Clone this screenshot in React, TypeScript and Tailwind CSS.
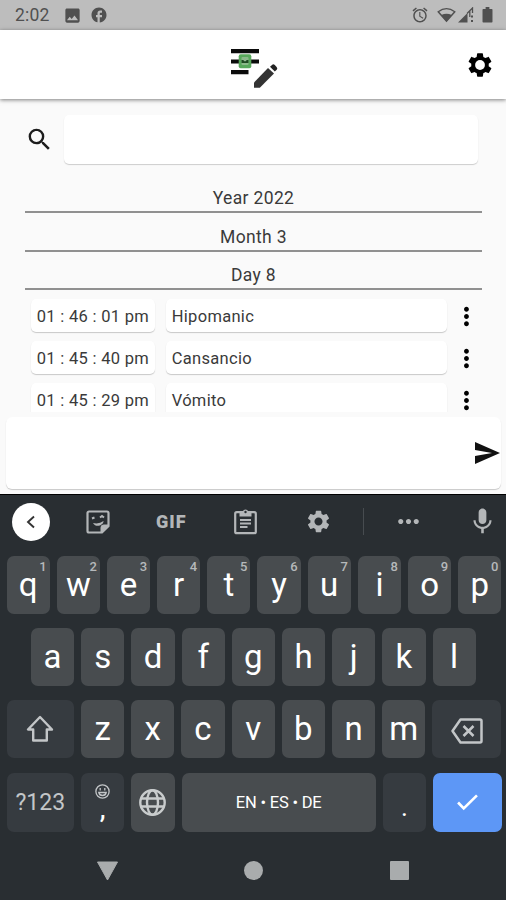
import type { ReactNode } from "react"
import { MdAlarm, MdFacebook, MdImage, MdMoreVert, MdSearch, MdSettings, MdMic, MdMoreHoriz } from "react-icons/md"

const entries = [
  { time: "01 : 46 : 01 pm", text: "Hipomanic" },
  { time: "01 : 45 : 40 pm", text: "Cansancio" },
  { time: "01 : 45 : 29 pm", text: "Vómito" },
]

const dates = ["Year 2022", "Month 3", "Day 8"]

function StatusBar() {
  return (
    <div className="flex h-[30px] shrink-0 items-center bg-[#bdbdbd] pl-[15px] pr-[13px] text-[#505050]">
      <span className="w-[50px] pt-px text-[17.500px] leading-none tracking-[0.200px]">2:02</span>
      <MdImage className="h-[19px] w-[19px] -ml-[2px]" />
      <MdFacebook className="ml-[8px] h-[18px] w-[18px]" />
      <MdAlarm className="ml-auto h-[18px] w-[18px]" />
      <svg className="ml-[8px] h-[16px] w-[19px]" viewBox="0 0 20 16">
        <path d="M1.3 4.6Q10-2 18.7 4.6L10 14.5Z" fill="none" stroke="currentColor" strokeWidth="1.5" />
        <path d="M4.5 8Q10 5.5 15.5 8L10 15Z" fill="currentColor" />
      </svg>
      <svg className="ml-[2px] h-[16px] w-[16px]" viewBox="0 0 16 16">
        <path d="M0 15.5L9.5 6v9.5z" fill="currentColor" />
        <path d="M9 6.5L14.5 1v5M11.8 4v6" fill="none" stroke="currentColor" strokeWidth="1.3" />
        <path d="M13 8.5h2v2h-2zM13 13h2v2h-2z" fill="currentColor" />
      </svg>
      <svg className="ml-[8px] h-[16px] w-[11px]" viewBox="0 0 11 17">
        <path d="M3.5 0h4v2H10a.8.8 0 01.8.8v13a.8.8 0 01-.8.8H1a.8.8 0 01-.8-.8v-13A.8.8 0 011 2h2.500z" fill="currentColor" />
      </svg>
    </div>
  )
}

function Logo() {
  return (
    <svg className="h-[44px] w-[50px]" viewBox="0 0 50 44">
      <path d="M1 3h28v4.200H1zM1 13.600h28v4H1zM1 24h17.500v4.300H1z" fill="#0b0b0b" />
      <rect x="8.700" y="8.300" width="12.600" height="14" rx="2" fill="#58a85b" />
      <rect x="11.500" y="11" width="7" height="8" rx="1" fill="#8bb98a" />
      <path d="M11.500 14h7v3h-7z" fill="#1f4a22" />
      <path d="M13.500 14l1.500 1 1.500-1" stroke="#a5c9a4" strokeWidth="1" fill="none" />
      <path d="M24 36.500l14-14.500 6 5.500-14.200 14.300H24z" fill="#333" />
      <path d="M40 20.800l2-1.900q1.300-1.200 2.800.2l1.800 1.800q1.400 1.500.1 2.900l-1.900 1.800z" fill="#222" />
    </svg>
  )
}

function Header() {
  return (
    <div className="relative z-10 flex h-[69px] shrink-0 items-center bg-white px-[12px] shadow-[0_1px_4px_rgba(0,0,0,0.5)]">
      <div className="w-[28px]" />
      <div className="flex flex-1 justify-center pl-[4px] pt-[7px]">
        <Logo />
      </div>
      <svg className="h-[28px] w-[28px]" viewBox="0 0 24 24">
        <path d="M19.430 12.980c.04-.32.07-.64.07-.98s-.03-.66-.07-.98l2.110-1.650c.19-.15.24-.42.12-.64l-2-3.460c-.12-.22-.39-.3-.61-.22l-2.490 1c-.52-.4-1.080-.73-1.690-.98l-.38-2.650C14.460 2.180 14.250 2 14 2h-4c-.25 0-.46.18-.49.42l-.38 2.650c-.61.25-1.170.59-1.690.98l-2.490-1c-.23-.09-.49 0-.61.22l-2 3.460c-.13.22-.07.49.12.64l2.110 1.650c-.04.32-.07.65-.07.98s.03.66.07.98l-2.110 1.650c-.19.15-.24.42-.12.64l2 3.460c.12.22.39.3.61.22l2.490-1c.52.4 1.080.73 1.690.98l.38 2.650c.03.24.24.42.49.42h4c.25 0 .46-.18.49-.42l.38-2.650c.61-.25 1.170-.59 1.690-.98l2.490 1c.23.09.49 0 .61-.22l2-3.460c.12-.22.07-.49-.12-.64l-2.110-1.650z" />
        <circle cx="12" cy="12" r="4.200" fill="#fff" />
      </svg>
    </div>
  )
}

function Journal() {
  return (
    <div className="h-[313px] shrink-0 overflow-hidden px-[25px] pt-[16px] text-[#3a3a3a]">
      <div className="flex items-center">
        <MdSearch className="h-[29px] w-[29px] text-[#1c1c1c]" />
        <div className="ml-[10px] h-[49px] w-[414px] rounded-[5px] bg-white shadow-[0_1px_1px_rgba(0,0,0,0.18)]" />
      </div>
      <div className="pt-[11px]">
        {dates.map((date) => (
          <div
            key={date}
            className="flex h-[38.400px] w-[457px] items-end justify-center border-b-2 border-[#909090] pb-[2px] text-[17.500px] leading-[21px] tracking-[0.350px]"
          >
            {date}
          </div>
        ))}
      </div>
      <div className="flex flex-col gap-[9px] pt-[9px] pl-[6px] text-[16.500px] tracking-[0.300px]">
        {entries.map((entry) => (
          <div key={entry.time} className="flex h-[33px] shrink-0 items-center">
            <div className="flex h-full w-[124px] items-center justify-center whitespace-nowrap rounded-[5px] bg-white pt-[3px] shadow-[0_1px_1px_rgba(0,0,0,0.2)]">
              {entry.time}
            </div>
            <div className="ml-[11px] flex h-full w-[282px] items-center rounded-[5px] bg-white pl-[6px] pt-[3px] shadow-[0_1px_1px_rgba(0,0,0,0.2)]">
              {entry.text}
            </div>
            <MdMoreVert className="ml-[5px] mt-[2px] h-[29px] w-[29px] text-black" />
          </div>
        ))}
      </div>
    </div>
  )
}

function Composer() {
  return (
    <div className="h-[82px] shrink-0 pl-[6px] pr-[5px] pt-[5px]">
      <div className="flex h-[72px] items-center justify-end rounded-[6px] bg-white pr-[1px] shadow-[0_1px_1px_rgba(0,0,0,0.2)]">
        <svg className="h-[22px] w-[25px]" viewBox="0 0 25 22">
          <path d="M0 0l25 11L0 22v-8l17-3L0 8z" fill="#111" />
        </svg>
      </div>
    </div>
  )
}

function Toolbar() {
  return (
    <div className="flex h-[61px] items-center pb-[8px] text-[#b3b6b8]">
      <div className="ml-[12px] flex h-[38px] w-[38px] items-center justify-center rounded-full bg-white">
        <svg className="h-[16px] w-[16px]" viewBox="0 0 16 16" fill="none" stroke="#333" strokeWidth="1.900">
          <path d="M11 2.500L5 8l6 5.500" />
        </svg>
      </div>
      <svg className="ml-[36px] h-[24px] w-[24px]" viewBox="0 0 24 24" fill="none" stroke="currentColor" strokeWidth="2.200">
        <path d="M3 1.500h18a1.500 1.500 0 011.500 1.500v13L16 22.500H3A1.500 1.500 0 011.500 21V3A1.500 1.500 0 013 1.500z" />
        <path d="M22 15h-4.500a2.500 2.500 0 00-2.500 2.500V22l7-7z" fill="currentColor" strokeWidth="1" />
        <path d="M6 8.500l2.500-1M14 7.500l2-1.500 2 1.500" strokeWidth="2" />
        <path d="M7 13q6 1.500 10.500-2c.3 4-7.500 7.500-10.500 2z" fill="currentColor" stroke="none" />
      </svg>
      <span className="ml-[46px] w-[32px] text-[18px] font-black leading-none tracking-[1px]">GIF</span>
      <svg className="ml-[46px] h-[27px] w-[23px]" viewBox="0 0 23 27">
        <rect x="1.200" y="4.200" width="20.600" height="21" rx="1.500" fill="none" stroke="currentColor" strokeWidth="2.200" />
        <path d="M5.500 3.500h3.300a2.800 2.800 0 015.400 0h3.300v5h-12z" fill="currentColor" />
        <circle cx="11.500" cy="4" r="1.200" fill="#292e32" />
        <path d="M6 12h11M6 15.500h11M6 19h7.500" stroke="currentColor" strokeWidth="2" />
      </svg>
      <MdSettings className="ml-[48px] h-[27px] w-[27px]" />
      <div className="ml-[31px] h-[27px] w-px bg-[#474c50]" />
      <MdMoreHoriz className="ml-[29px] h-[31px] w-[31px]" />
      <MdMic className="ml-[43px] h-[31px] w-[31px]" />
    </div>
  )
}

function Key({ label, hint }: { label: string; hint?: string }) {
  return (
    <div className="relative flex h-full w-[43.200px] shrink-0 items-center justify-center rounded-[7px] bg-[#484c4f] pb-[1px] text-[33px] leading-none text-white">
      {label}
      {hint && <span className="absolute right-[3px] top-[4px] text-[13px] leading-none font-medium text-[#b6b9bb]">{hint}</span>}
    </div>
  )
}

function DarkKey({ className, children }: { className: string; children: ReactNode }) {
  return (
    <div className={`flex h-full shrink-0 items-center justify-center rounded-[7px] bg-[#363b40] text-[#c3c6c8] ${className}`}>
      {children}
    </div>
  )
}

function Keyboard() {
  return (
    <div className="h-[406px] shrink-0 border-t border-black bg-[#292e32]">
      <Toolbar />
      <div className="flex flex-col gap-[14.700px] pl-[6.500px]">
        <div className="flex h-[57.500px] gap-[7px]">
          {"qwertyuiop".split("").map((k, i) => (
            <Key key={k} label={k} hint={String((i + 1) % 10)} />
          ))}
        </div>
        <div className="flex h-[57.500px] gap-[7px] pl-[24.500px]">
          {"asdfghjkl".split("").map((k) => (
            <Key key={k} label={k} />
          ))}
        </div>
        <div className="flex h-[57.500px] gap-[7px]">
          <DarkKey className="w-[67.500px]">
            <svg className="h-[28px] w-[28px]" viewBox="0 0 28 28" fill="none" stroke="currentColor" strokeWidth="2.400" strokeLinejoin="round">
              <path d="M14 2L2 14.500h5.200v11h13.600v-11H26z" />
            </svg>
          </DarkKey>
          {"zxcvbnm".split("").map((k) => (
            <Key key={k} label={k} />
          ))}
          <DarkKey className="w-[68.500px]">
            <svg className="mt-[3px] h-[26px] w-[32px]" viewBox="0 0 32 26" fill="none" stroke="currentColor" strokeWidth="2.500">
              <path d="M9.500 1.500H29a1.500 1.500 0 011.500 1.500v20a1.500 1.500 0 01-1.500 1.500H9.500L1.500 13z" strokeLinejoin="round" />
              <path d="M12.500 8l10 10M22.500 8l-10 10" />
            </svg>
          </DarkKey>
        </div>
        <div className="flex h-[59px] gap-[7px]">
          <DarkKey className="w-[67.500px] pt-[2px] text-[23px]">?123</DarkKey>
          <DarkKey className="w-[43.200px] flex-col">
            <svg className="mt-[2px] h-[15px] w-[15px]" viewBox="0 0 15 15" fill="none" stroke="currentColor" strokeWidth="1.300">
              <circle cx="7.500" cy="7.500" r="6.600" />
              <path d="M5.200 4v2.500M9.800 4v2.500M3.800 8.500h7.400c-.8 4-6.600 4-7.400 0z" />
            </svg>
            <span className="text-[26px] font-medium leading-[28px] text-white -mt-[4px]">,</span>
          </DarkKey>
          <div className="flex w-[43.400px] items-center justify-center rounded-[7px] bg-[#484c4f] text-[#c9cccd]">
            <svg className="h-[27px] w-[27px]" viewBox="0 0 27 27" fill="none" stroke="currentColor" strokeWidth="2.400">
              <circle cx="13.500" cy="13.500" r="12.200" />
              <ellipse cx="13.500" cy="13.500" rx="5.500" ry="12.200" />
              <path d="M2 9.500h23M2 17.500h23" />
            </svg>
          </div>
          <div className="flex w-[194.200px] items-center justify-center rounded-[7px] bg-[#484c4f] pt-[2px] text-[16.500px] tracking-[-0.200px] text-white">
            EN • ES • DE
          </div>
          <DarkKey className="w-[43.200px]">
            <span className="pt-[9px] text-[26px] leading-none text-white">.</span>
          </DarkKey>
          <div className="flex w-[69px] items-center justify-center rounded-[7px] bg-[#5d97f6]">
            <svg className="h-[17px] w-[23px]" viewBox="0 0 24 18" fill="none" stroke="#fff" strokeWidth="2.800">
              <path d="M2 9l6 6.200L22 1.500" />
            </svg>
          </div>
        </div>
      </div>
      <div className="flex items-center pt-[29px] text-[#a9acad]">
        <svg className="ml-[96px] h-[20px] w-[23px]" viewBox="0 0 23 20">
          <path d="M1.500 1h20L11.500 19z" fill="currentColor" stroke="currentColor" strokeLinejoin="round" />
        </svg>
        <div className="ml-[125px] h-[19px] w-[19px] rounded-full bg-[#a9acad]" />
        <div className="ml-[127px] h-[19px] w-[19px] rounded-[1px] bg-[#a9acad]" />
      </div>
    </div>
  )
}

export default function App() {
  return (
    <div className="flex h-[900px] w-[506px] flex-col overflow-hidden bg-[#fafafa] font-[Roboto,sans-serif]">
      <StatusBar />
      <Header />
      <Journal />
      <Composer />
      <Keyboard />
    </div>
  )
}
